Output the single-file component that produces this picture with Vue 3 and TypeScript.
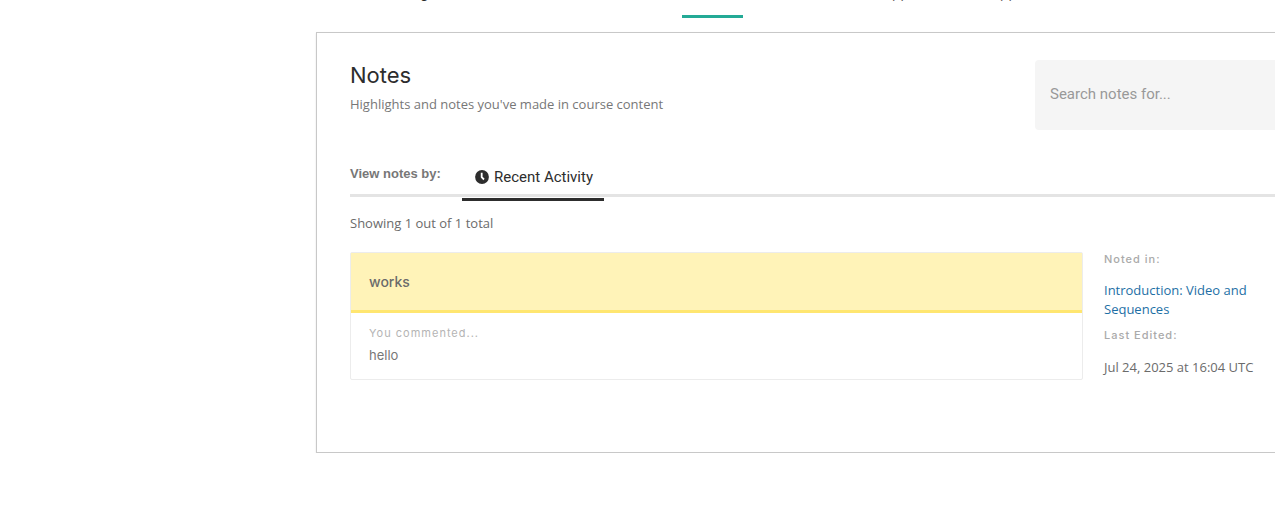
<script setup lang="ts">
import { ref } from 'vue'

interface Note {
  id: number
  quote: string
  comment: string
  section: string
  edited: string
}

const query = ref('')
const notes: Note[] = [
  {
    id: 1,
    quote: 'works',
    comment: 'hello',
    section: 'Introduction: Video and Sequences',
    edited: 'Jul 24, 2025 at 16:04 UTC',
  },
]
</script>

<template>
  <div class="page">
    <nav class="course-tabs" aria-label="Course">
      <span class="tab tab-first">g</span>
      <span class="tab tab-active"></span>
      <span class="tab tab-third">pp</span>
      <span class="tab tab-fourth">pp</span>
    </nav>
    <main class="panel">
      <header class="panel-header">
        <div>
          <h1 class="title">Notes</h1>
          <p class="subtitle">Highlights and notes you've made in course content</p>
        </div>
        <form class="search" role="search" @submit.prevent>
          <input v-model="query" class="search-input" type="search" aria-label="Search notes for..." placeholder="Search notes for..." />
        </form>
      </header>

      <div class="view-bar">
        <h2 class="view-label">View notes by:</h2>
        <button class="view-tab" type="button" aria-pressed="true">
          <svg class="clock" viewBox="0 0 14 14" aria-hidden="true">
            <circle cx="7" cy="7" r="6.9" fill="#2d2d2d" />
            <path d="M6.7 2.8V7.2L9 9.5" fill="none" stroke="#fff" stroke-width="1.8" />
          </svg>
          Recent Activity
        </button>
      </div>

      <p class="count">Showing 1 out of 1 total</p>

      <article v-for="note in notes" :key="note.id" class="note">
        <div class="note-card">
          <p class="quote">{{ note.quote }}</p>
          <div class="comment">
            <p class="comment-label">You commented...</p>
            <p class="comment-text">{{ note.comment }}</p>
          </div>
        </div>
        <aside class="meta">
          <p class="meta-label">Noted in:</p>
          <a class="meta-link" href="#">{{ note.section }}</a>
          <p class="meta-label">Last Edited:</p>
          <p class="meta-date">{{ note.edited }}</p>
        </aside>
      </article>
    </main>
  </div>
</template>

<style>
body {
  margin: 0;
  background: #fff;
}
</style>

<style scoped>
.page {
  overflow: hidden;
  font-family: "Open Sans", "Liberation Sans", sans-serif;
  font-size: 13px;
  color: #6b6b6b;
}
h1, h2, p {
  margin: 0;
}
.course-tabs {
  display: flex;
  height: 18px;
  overflow: hidden;
  font-family: Inter, sans-serif;
  font-size: 14px;
  line-height: 18px;
  color: #2d2d2d;
}
.tab {
  box-sizing: border-box;
  height: 34px;
  margin-top: -16px;
}
.tab-first {
  width: 262px;
  margin-left: 420px;
}
.tab-active {
  width: 61px;
  border-bottom: 3px solid #23aa96;
}
.tab-third {
  width: 108px;
  margin-left: 149px;
}
.panel {
  box-sizing: border-box;
  min-height: 421px;
  margin: 14px 0 0 316px;
  padding: 27px 0 0 33px;
  border: 1px solid #c8c8c8;
  border-right: 0;
  box-shadow: 0 1px 2px rgba(0, 0, 0, 0.1);
}
.panel-header {
  display: flex;
  justify-content: space-between;
  height: 70px;
}
.title {
  font: 400 22px/30px Inter, sans-serif;
  color: #2d2d2d;
}
.subtitle {
  margin-top: 4px;
  line-height: 20px;
  color: #777;
}
.search {
  width: 240px;
}
.search-input {
  box-sizing: border-box;
  width: 100%;
  height: 70px;
  padding: 0 15px 3px;
  border: 0;
  border-radius: 4px 0 0 4px;
  background: #f5f5f5;
  font: 400 15px/20px Roboto, sans-serif;
  appearance: none;
}
.search-input::placeholder {
  color: #999;
}
.view-bar {
  display: flex;
  height: 64px;
  border-bottom: 3px solid #e4e4e4;
}
.view-label {
  width: 112px;
  padding-top: 34px;
  font: 700 13px/20px "Liberation Sans", sans-serif;
  color: #777;
}
.view-tab {
  display: flex;
  align-items: center;
  gap: 5px;
  box-sizing: border-box;
  height: 46px;
  margin-top: 25px;
  padding: 0 11px 0 13px;
  border: 0;
  border-bottom: 3px solid #2d2d2d;
  background: none;
  font: 400 15px/20px Roboto, sans-serif;
  color: #2d2d2d;
}
.clock {
  width: 14px;
  height: 14px;
}
.count {
  margin-top: 16px;
  line-height: 20px;
}
.note {
  display: flex;
  gap: 21px;
  margin-top: 19px;
}
.note-card {
  box-sizing: border-box;
  flex: 1;
  height: 128px;
  border: 1px solid #ececec;
  border-radius: 2px;
}
.quote {
  padding: 18px;
  border-bottom: 3px solid #ffe670;
  background: #fff3b8;
  font: 500 14px/21px Inter, sans-serif;
}
.comment {
  padding: 12px 18px;
}
.comment-label {
  font: 400 11px/16px Inter, sans-serif;
  letter-spacing: 1px;
  color: #b4b4b4;
}
.comment-text {
  margin-top: 4px;
  font: 400 13px/20px Inter, sans-serif;
  color: #777;
}
.meta {
  width: 171px;
}
.meta-label {
  font: 500 11px/14px Inter, sans-serif;
  letter-spacing: 1px;
  color: #aaa;
}
.meta-link {
  display: block;
  max-width: 150px;
  margin: 15px 0 9px;
  line-height: 19px;
  color: #1d6fa5;
  text-decoration: none;
}
.meta-date {
  margin-top: 16px;
  line-height: 19px;
}
</style>
